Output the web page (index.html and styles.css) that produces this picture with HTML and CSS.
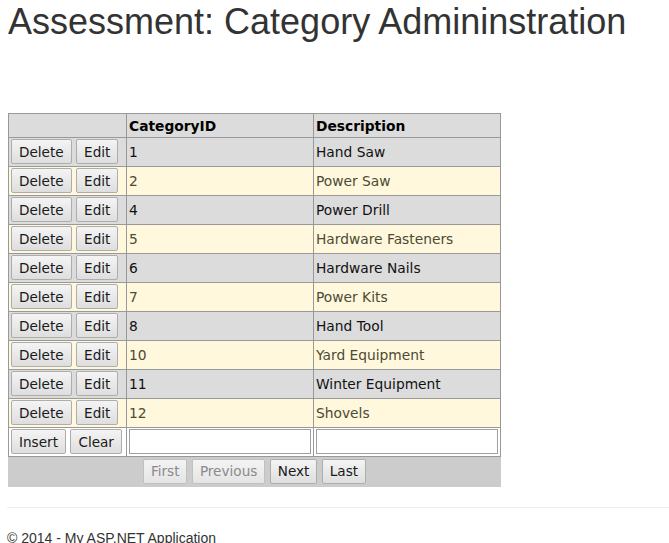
FILE: index.html
```html
<!DOCTYPE html>
<html>
<head>
<meta charset="utf-8">
<title>Category Administration</title>
<link rel="stylesheet" href="styles.css">
</head>
<body>
<div class="page">
  <h1 class="title">Assessment: Category Admininstration</h1>
  <table class="grid">
    <colgroup><col class="c1"><col class="c2"><col class="c3"></colgroup>
    <thead>
      <tr class="head"><th></th><th>CategoryID</th><th>Description</th></tr>
    </thead>
    <tbody>
      <tr class="row"><td><button class="btn">Delete</button> <button class="btn">Edit</button></td><td>1</td><td>Hand Saw</td></tr>
      <tr class="alt"><td><button class="btn">Delete</button> <button class="btn">Edit</button></td><td>2</td><td>Power Saw</td></tr>
      <tr class="row"><td><button class="btn">Delete</button> <button class="btn">Edit</button></td><td>4</td><td>Power Drill</td></tr>
      <tr class="alt"><td><button class="btn">Delete</button> <button class="btn">Edit</button></td><td>5</td><td>Hardware Fasteners</td></tr>
      <tr class="row"><td><button class="btn">Delete</button> <button class="btn">Edit</button></td><td>6</td><td>Hardware Nails</td></tr>
      <tr class="alt"><td><button class="btn">Delete</button> <button class="btn">Edit</button></td><td>7</td><td>Power Kits</td></tr>
      <tr class="row"><td><button class="btn">Delete</button> <button class="btn">Edit</button></td><td>8</td><td>Hand Tool</td></tr>
      <tr class="alt"><td><button class="btn">Delete</button> <button class="btn">Edit</button></td><td>10</td><td>Yard Equipment</td></tr>
      <tr class="row"><td><button class="btn">Delete</button> <button class="btn">Edit</button></td><td>11</td><td>Winter Equipment</td></tr>
      <tr class="alt"><td><button class="btn">Delete</button> <button class="btn">Edit</button></td><td>12</td><td>Shovels</td></tr>
      <tr class="insert"><td><button class="btn">Insert</button> <button class="btn">Clear</button></td><td><input class="field" type="text"></td><td><input class="field" type="text"></td></tr>
      <tr class="pager"><td colspan="3"><button class="btn" disabled>First</button> <button class="btn" disabled>Previous</button> <button class="btn">Next</button> <button class="btn">Last</button></td></tr>
    </tbody>
  </table>
  <hr class="rule">
  <footer class="footer">© 2014 - My ASP.NET Application</footer>
</div>
</body>
</html>
```
FILE: styles.css
```css
html, body { margin: 0; padding: 0; background: #fff; }
.page { padding: 0 0 0 7px; }
.title {
  margin: 0 0 0 1px;
  padding-top: 2px;
  font-family: "Liberation Sans", Arial, sans-serif;
  font-weight: 400;
  font-size: 36px;
  line-height: 40px;
  color: #333;
}
.grid {
  margin: 71px 0 0 1px;
  border-collapse: collapse;
  table-layout: fixed;
  width: 493px;
  font-family: "DejaVu Sans", Verdana, sans-serif;
  font-size: 13.8px;
}
.c1 { width: 118px; }
.c2 { width: 187px; }
.c3 { width: 187px; }
.grid th, .grid td {
  border: 1px solid #999;
  padding: 1px 2px 2px 2px;
  text-align: left;
  vertical-align: middle;
  white-space: nowrap;
}
.head th {
  background: #dcdcdc;
  color: #000;
  font-weight: bold;
  height: 21px;
  padding: 1px 2px 1px 2px;
}
.row td { background: #dcdcdc; color: #111; height: 25px; }
.alt td { background: #fff8dc; color: #4d4a35; height: 25px; }
.insert td { background: #fff; height: 25px; }
.btn {
  font-family: "DejaVu Sans", Verdana, sans-serif;
  font-size: 13.6px;
  color: #1a1a1a;
  height: 25px;
  padding: 0 7px;
  margin: 0;
  border: 1px solid #adadad;
  border-radius: 2px;
  background: linear-gradient(#f4f4f4, #dedede);
  vertical-align: middle;
}
.btn[disabled] { color: #8a8a8a; border-color: #c0c0c0; background: linear-gradient(#f4f4f4, #e4e4e4); }
.field {
  box-sizing: border-box;
  width: 100%;
  height: 25px;
  margin: 0;
  border: 1px solid #a0a0a0;
  background: #fff;
  vertical-align: middle;
}
.pager td {
  background: #cccccc;
  border: 1px solid #cccccc;
  text-align: center;
  height: 26px;
  padding: 1px 2px 2px 2px;
}
.rule {
  margin: 20px 0 0 0;
  border: 0;
  border-top: 1px solid #eee;
}
.footer {
  margin-top: 22px;
  font-family: "Liberation Sans", Arial, sans-serif;
  font-size: 14px;
  color: #333;
}
```
